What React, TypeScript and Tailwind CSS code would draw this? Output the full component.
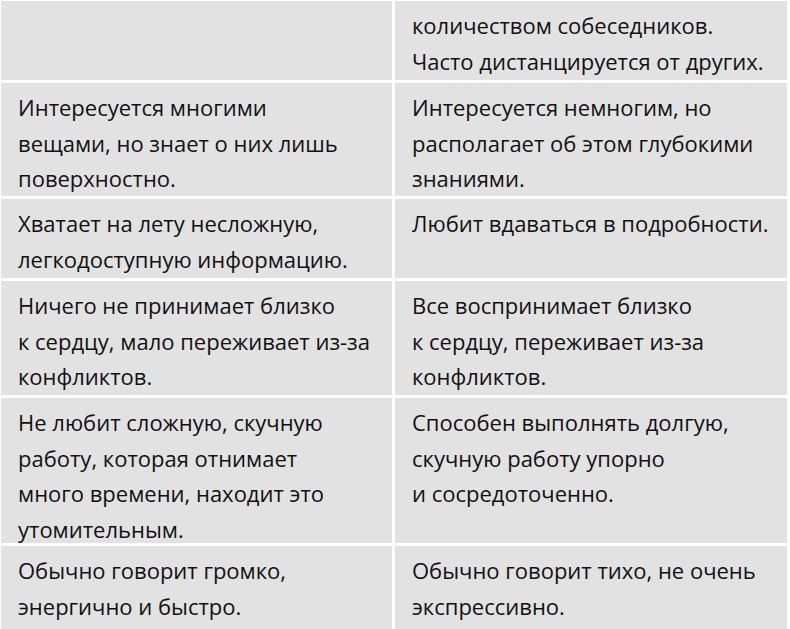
const rows: [string[], string[], string][] = [
  [[], ["количеством собеседников.", "Часто дистанцируется от других."], "h-[79px]"],
  [
    ["Интересуется многими", "вещами, но знает о них лишь", "поверхностно."],
    ["Интересуется немногим, но", "располагает об этом глубокими", "знаниями."],
    "h-[113px]",
  ],
  [
    ["Хватает на лету несложную,", "легкодоступную информацию."],
    ["Любит вдаваться в подробности."],
    "h-[79px]",
  ],
  [
    ["Ничего не принимает близко", "к сердцу, мало переживает из-за", "конфликтов."],
    ["Все воспринимает близко", "к сердцу, переживает из-за", "конфликтов."],
    "h-[114px]",
  ],
  [
    ["Не любит сложную, скучную", "работу, которая отнимает", "много времени, находит это", "утомительным."],
    ["Способен выполнять долгую,", "скучную работу упорно", "и сосредоточенно."],
    "h-[145px]",
  ],
  [
    ["Обычно говорит громко,", "энергично и быстро."],
    ["Обычно говорит тихо, не очень", "экспрессивно."],
    "h-[83px]",
  ],
];

function Cell({ lines, h }: { lines: string[]; h: string }) {
  return (
    <div className={`${h} bg-[#e2e2e2] pl-[17px] pt-[7px] overflow-hidden`}>
      {lines.map((l) => (
        <div key={l} className="whitespace-nowrap leading-[35.5px]">
          {l}
        </div>
      ))}
    </div>
  );
}

export default function App() {
  return (
    <div className="w-[790px] h-[629px] overflow-hidden bg-white pt-px pl-px">
      <div
        className="grid grid-cols-[391px_392px] gap-[3px] text-[22px] text-[#111111]"
        style={{ fontFamily: '"Open Sans", "Noto Sans", sans-serif' }}
      >
        {rows.map(([l, r, h], i) => (
          <>
            <Cell key={`l${i}`} lines={l} h={h} />
            <Cell key={`r${i}`} lines={r} h={h} />
          </>
        ))}
      </div>
    </div>
  );
}
